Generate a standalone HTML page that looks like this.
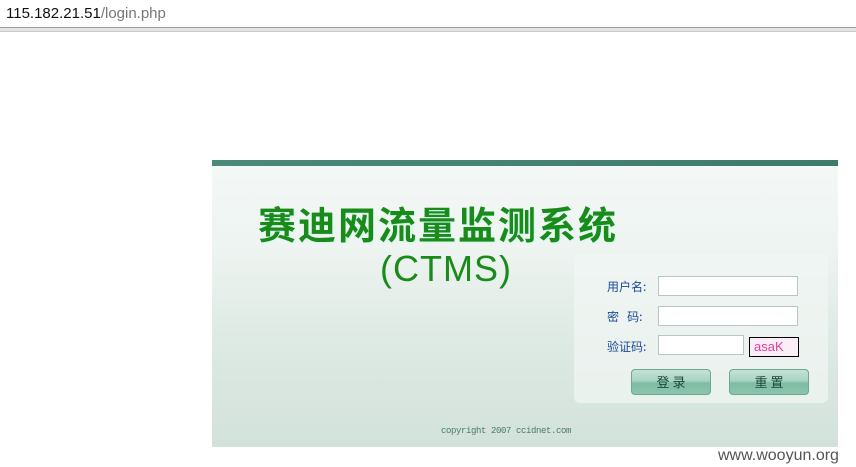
<!DOCTYPE html>
<html><head><meta charset="utf-8"><style>
body{margin:0;width:856px;height:467px;background:#fff;position:relative;overflow:hidden;font-family:"Liberation Sans","Noto Sans CJK SC",sans-serif}
.addr{position:absolute;left:0;top:0;width:856px;height:27px;background:#fff;border-bottom:1px solid #a0a0a0}
.addr2{position:absolute;left:0;top:28px;width:856px;height:3px;background:#e4e4e4;border-bottom:1px solid #c8c8c8}
.url{position:absolute;left:6px;top:5px;font-size:15px;color:#111}
.url span{color:#777}
.panel{position:absolute;left:212px;top:160px;width:626px;height:287px;background:linear-gradient(180deg,#f4f8f6 0%,#eef4f1 30%,#dde9e3 65%,#d2e2da 100%)}
.bar{position:absolute;left:0;top:0;width:626px;height:6px;background:linear-gradient(90deg,#4a8a78,#3e7a6c)}
.title{position:absolute;left:46px;top:35px;font-size:38px;font-weight:bold;color:#1a8a1a;letter-spacing:2px;font-family:"Noto Sans CJK SC",sans-serif;text-shadow:1px 1px 0 #cfe;white-space:nowrap}
.sub{position:absolute;left:168px;top:88px;font-size:36px;color:#1a8a1a;font-family:"Liberation Sans","Noto Sans CJK SC",sans-serif;letter-spacing:1px}
.box{position:absolute;left:362px;top:93px;width:254px;height:150px;background:rgba(240,246,243,.75);border-radius:6px}
.lbl{position:absolute;font-size:12px;color:#1a4a9a;font-family:"Noto Sans CJK SC",sans-serif}
.in{position:absolute;background:#fff;border:1px solid #b8c8c0;box-sizing:border-box}
.cap{position:absolute;left:537px;top:177px;width:50px;height:20px;border:1px solid #000;background:#fbeef6;box-sizing:border-box;color:#e040a0;font-size:13px;line-height:18px;padding-left:4px}
.btn{position:absolute;width:80px;height:26px;border-radius:4px;background:linear-gradient(180deg,#c4e2d6 0%,#a8d4c2 45%,#7ebca4 55%,#8cc4ae 100%);border:1px solid #6aa890;box-sizing:border-box;text-align:center;font-size:13px;line-height:24px;color:#1a4a3a;font-family:"Noto Sans CJK SC",sans-serif}
.copy{position:absolute;left:229px;top:266px;font-size:9px;color:#4a7a6a;font-family:"Liberation Mono",monospace;letter-spacing:-0.4px}
.wm{position:absolute;left:718px;top:447px;font-size:16px;color:#555}
</style></head><body>
<div class="addr"><div class="url">115.182.21.51<span>/login.php</span></div></div>
<div class="addr2"></div>
<div class="panel">
<div class="bar"></div>
<div class="title">赛迪网流量监测系统</div>
<div class="sub">(CTMS)</div>
<div class="box"></div>
<div class="lbl" style="left:395px;top:118px">用户名:</div>
<div class="lbl" style="left:395px;top:148px">密&nbsp;&nbsp;&nbsp;码:</div>
<div class="lbl" style="left:395px;top:178px">验证码:</div>
<div class="in" style="left:446px;top:116px;width:140px;height:20px"></div>
<div class="in" style="left:446px;top:146px;width:140px;height:20px"></div>
<div class="in" style="left:446px;top:175px;width:86px;height:20px"></div>
<div class="cap">asaK</div>
<div class="btn" style="left:419px;top:209px">登 录</div>
<div class="btn" style="left:517px;top:209px">重 置</div>
<div class="copy">copyright 2007 ccidnet.com</div>
</div>
<div class="wm">www.wooyun.org</div>
</body></html>
